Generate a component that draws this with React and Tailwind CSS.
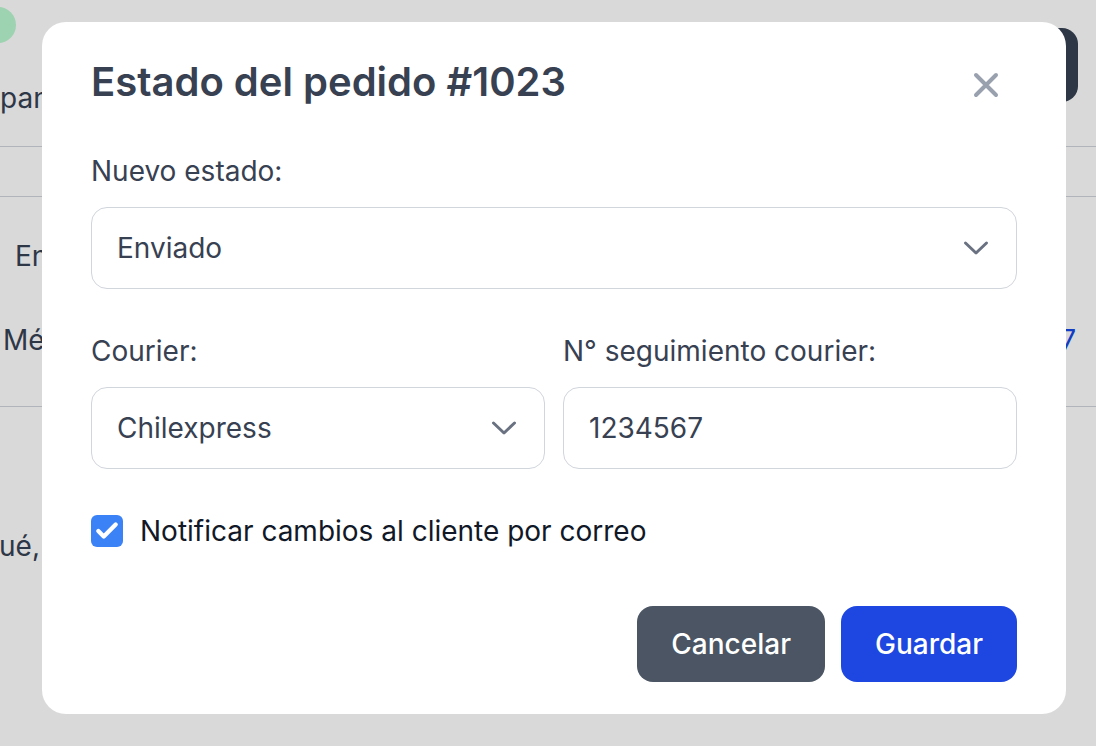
import React from 'react';
import { Check } from 'lucide-react';

const Chevron = () => (
    <svg width="26" height="16" viewBox="0 0 26 16" fill="none" className="text-gray-500">
        <path d="M2.5 3 L13 13 L23.5 3" stroke="currentColor" strokeWidth="3" strokeLinecap="round" strokeLinejoin="round" />
    </svg>
);

const CloseIcon = () => (
    <svg width="26" height="26" viewBox="0 0 26 26" fill="none">
        <path d="M3 3 L23 23 M23 3 L3 23" stroke="currentColor" strokeWidth="4" strokeLinecap="round" />
    </svg>
);

const BackgroundPage = () => (
    <div className="h-[746px] w-full overflow-hidden bg-white text-gray-700 text-[28px]">
        <div className="-ml-[120px] w-[1226px]">
            <div className="flex h-[147px] items-start justify-between border-b border-gray-300 pr-[28px]">
                <div className="flex flex-col pt-[7px]">
                    <div className="ml-[100px] h-[36px] w-[36px] rounded-full bg-green-200" />
                    <span className="mt-[34px] whitespace-nowrap">
                        <span className="inline-block w-[120px] text-right">Com</span>pania
                    </span>
                </div>
                <div className="mt-[28px] h-[74px] w-[180px] rounded-[16px] bg-gray-700" />
            </div>
            <div className="h-[50px] border-b border-gray-300" />
            <div className="flex h-[210px] flex-col border-b border-gray-300">
                <span className="ml-[135px] mt-[38px]">Enviado</span>
                <div className="mt-[42px] flex justify-between pr-[30px]">
                    <span className="ml-[123px]">Método de envío</span>
                    <span className="text-blue-700">1234567</span>
                </div>
            </div>
            <div className="pt-[118px] whitespace-nowrap">
                <span className="inline-block w-[119px] text-right">¿Por q</span>ué, no llega?
            </div>
        </div>
    </div>
);

const App = () => {
    return (
        <div className="relative" style={{ fontFamily: 'Inter, "Noto Sans", sans-serif' }}>
            <BackgroundPage />
            <div className="fixed inset-0 bg-black/15 pl-[42px] pt-[22px]">
                <div className="w-[1024px] rounded-[24px] bg-white px-[49px] pb-[32px] pt-[40px]">
                    <div className="flex items-center justify-between">
                        <h2 className="text-[40px] leading-[40px] font-semibold text-[#374151]">Estado del pedido #1023</h2>
                        <button className="mr-[18px] mt-[6px] text-gray-400">
                            <CloseIcon />
                        </button>
                    </div>

                    <label className="mt-[51px] block text-[28px] leading-[36px] text-[#374151]">Nuevo estado:</label>
                    <div className="mt-[18px] flex h-[82px] items-center justify-between rounded-[16px] border border-gray-300 pl-[25px] pr-[27px] text-[28px] text-[#374151]">
                        <span>Enviado</span>
                        <Chevron />
                    </div>

                    <div className="mt-[44px] grid grid-cols-2 gap-[18px]">
                        <div>
                            <label className="block text-[28px] leading-[36px] text-[#374151]">Courier:</label>
                            <div className="mt-[18px] flex h-[82px] items-center justify-between rounded-[16px] border border-gray-300 pl-[25px] pr-[27px] text-[28px] text-[#374151]">
                                <span>Chilexpress</span>
                                <Chevron />
                            </div>
                        </div>
                        <div>
                            <label className="block text-[28px] leading-[36px] text-[#374151]">N° seguimiento courier:</label>
                            <div className="mt-[18px] flex h-[82px] items-center rounded-[16px] border border-gray-300 px-[25px] text-[28px] text-[#374151]">
                                1234567
                            </div>
                        </div>
                    </div>

                    <div className="mt-[44px] flex items-center gap-[17px]">
                        <span className="flex h-[32px] w-[32px] items-center justify-center rounded-[6px] bg-[#3b82f6] text-white">
                            <Check size={26} strokeWidth={4} />
                        </span>
                        <span className="text-[28px] leading-[36px] text-[#111827]">Notificar cambios al cliente por correo</span>
                    </div>

                    <div className="mt-[57px] flex justify-end gap-[16px]">
                        <button className="h-[76px] rounded-[16px] bg-[#4b5563] px-[34px] text-[28px] font-medium text-white">Cancelar</button>
                        <button className="h-[76px] rounded-[16px] bg-[#1d47e0] px-[34px] text-[28px] font-medium text-white">Guardar</button>
                    </div>
                </div>
            </div>
        </div>
    );
};

export default App;
